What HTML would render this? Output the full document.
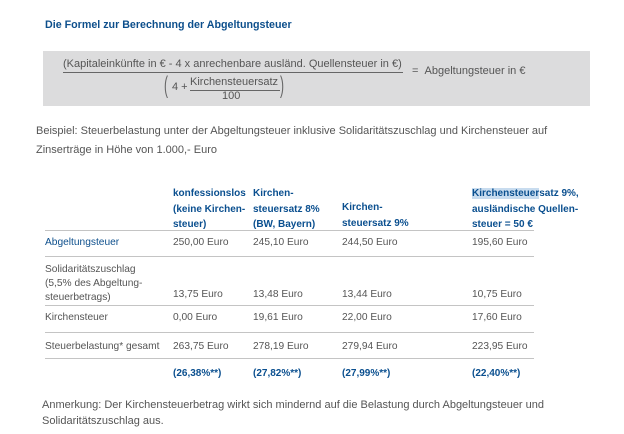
<!DOCTYPE html>
<html><head><meta charset="utf-8"><style>
body{margin:0;width:624px;height:434px;background:#fff;font-family:"Liberation Sans",Arial,sans-serif;position:relative;overflow:hidden}
.a{position:absolute;white-space:nowrap;line-height:1}
.t{font-size:10.2px;color:#555}
.b{font-size:10px;color:#0a4f8f;font-weight:bold}
.f{font-size:11px;color:#555}
.hl{position:absolute;left:45px;width:489px;height:0;border-top:1.5px solid #c4c4c4}
</style></head><body>
<div class="a" style="left:45px;top:20px;font-size:10.7px;font-weight:bold;color:#0d4f8c">Die Formel zur Berechnung der Abgeltungsteuer</div>
<div style="position:absolute;left:43px;top:51px;width:547px;height:55px;background:#dcdcdd"></div>
<div class="a f" style="left:63px;top:59px">(Kapitaleinkünfte in € - 4 x anrechenbare ausländ. Quellensteuer in €)</div>
<div style="position:absolute;left:63px;top:72px;width:340px;border-top:1px solid #666"></div>
<div class="a f" style="left:412px;top:66px">= &nbsp;Abgeltungsteuer in €</div>
<div class="a" style="left:164px;top:74px;font-size:24px;color:#666;transform:scaleX(0.5);transform-origin:left">(</div>
<div class="a f" style="left:172px;top:82px">4 +</div>
<div class="a f" style="left:190px;top:77px">Kirchensteuersatz</div>
<div style="position:absolute;left:190px;top:90px;width:90px;border-top:1px solid #666"></div>
<div class="a f" style="left:222px;top:91px">100</div>
<div class="a" style="left:280px;top:74px;font-size:24px;color:#666;transform:scaleX(0.5);transform-origin:left">)</div>
<div class="a" style="left:36px;top:126px;font-size:11px;color:#555">Beispiel: Steuerbelastung unter der Abgeltungsteuer inklusive Solidaritätszuschlag und Kirchensteuer auf</div>
<div class="a" style="left:36px;top:145px;font-size:11px;color:#555">Zinserträge in Höhe von 1.000,- Euro</div>

<div class="a b" style="left:173px;top:186px;line-height:15.5px">konfessionslos<br>(keine Kirchen-<br>steuer)</div>
<div class="a b" style="left:253px;top:186px;line-height:15.5px">Kirchen-<br>steuersatz 8%<br>(BW, Bayern)</div>
<div class="a b" style="left:342px;top:200px;line-height:15.5px">Kirchen-<br>steuersatz 9%</div>
<div class="a b" style="left:472px;top:186px;line-height:15.5px"><span style="background:#c8dcef">Kirchensteuer</span>satz 9%,<br>ausländische Quellen-<br>steuer = 50 €</div>
<div class="hl" style="top:230px"></div>
<div class="a" style="left:45px;top:238px;font-size:10.2px;color:#0d4f8c">Abgeltungsteuer</div>
<div class="a t" style="left:173px;top:238px">250,00 Euro</div><div class="a t" style="left:253px;top:238px">245,10 Euro</div><div class="a t" style="left:342px;top:238px">244,50 Euro</div><div class="a t" style="left:472px;top:238px">195,60 Euro</div>
<div class="hl" style="top:256px"></div>
<div class="a t" style="left:45px;top:263px;line-height:14px">Solidaritätszuschlag<br>(5,5% des Abgeltung-<br>steuerbetrags)</div>
<div class="a t" style="left:173px;top:290px">13,75 Euro</div><div class="a t" style="left:253px;top:290px">13,48 Euro</div><div class="a t" style="left:342px;top:290px">13,44 Euro</div><div class="a t" style="left:472px;top:290px">10,75 Euro</div>
<div class="hl" style="top:305px"></div>
<div class="a t" style="left:45px;top:313px">Kirchensteuer</div>
<div class="a t" style="left:173px;top:313px">0,00 Euro</div><div class="a t" style="left:253px;top:313px">19,61 Euro</div><div class="a t" style="left:342px;top:313px">22,00 Euro</div><div class="a t" style="left:472px;top:313px">17,60 Euro</div>
<div class="hl" style="top:332px"></div>
<div class="a t" style="left:45px;top:342px">Steuerbelastung* gesamt</div>
<div class="a t" style="left:173px;top:342px">263,75 Euro</div><div class="a t" style="left:253px;top:342px">278,19 Euro</div><div class="a t" style="left:342px;top:342px">279,94 Euro</div><div class="a t" style="left:472px;top:342px">223,95 Euro</div>
<div class="hl" style="top:358px"></div>
<div class="a b" style="left:173px;top:369px">(26,38%**)</div><div class="a b" style="left:253px;top:369px">(27,82%**)</div><div class="a b" style="left:342px;top:369px">(27,99%**)</div><div class="a b" style="left:472px;top:369px">(22,40%**)</div>
<div class="a" style="left:42px;top:400px;font-size:11px;color:#555">Anmerkung: Der Kirchensteuerbetrag wirkt sich mindernd auf die Belastung durch Abgeltungsteuer und</div>
<div class="a" style="left:42px;top:416px;font-size:11px;color:#555">Solidaritätszuschlag aus.</div>
</body></html>
